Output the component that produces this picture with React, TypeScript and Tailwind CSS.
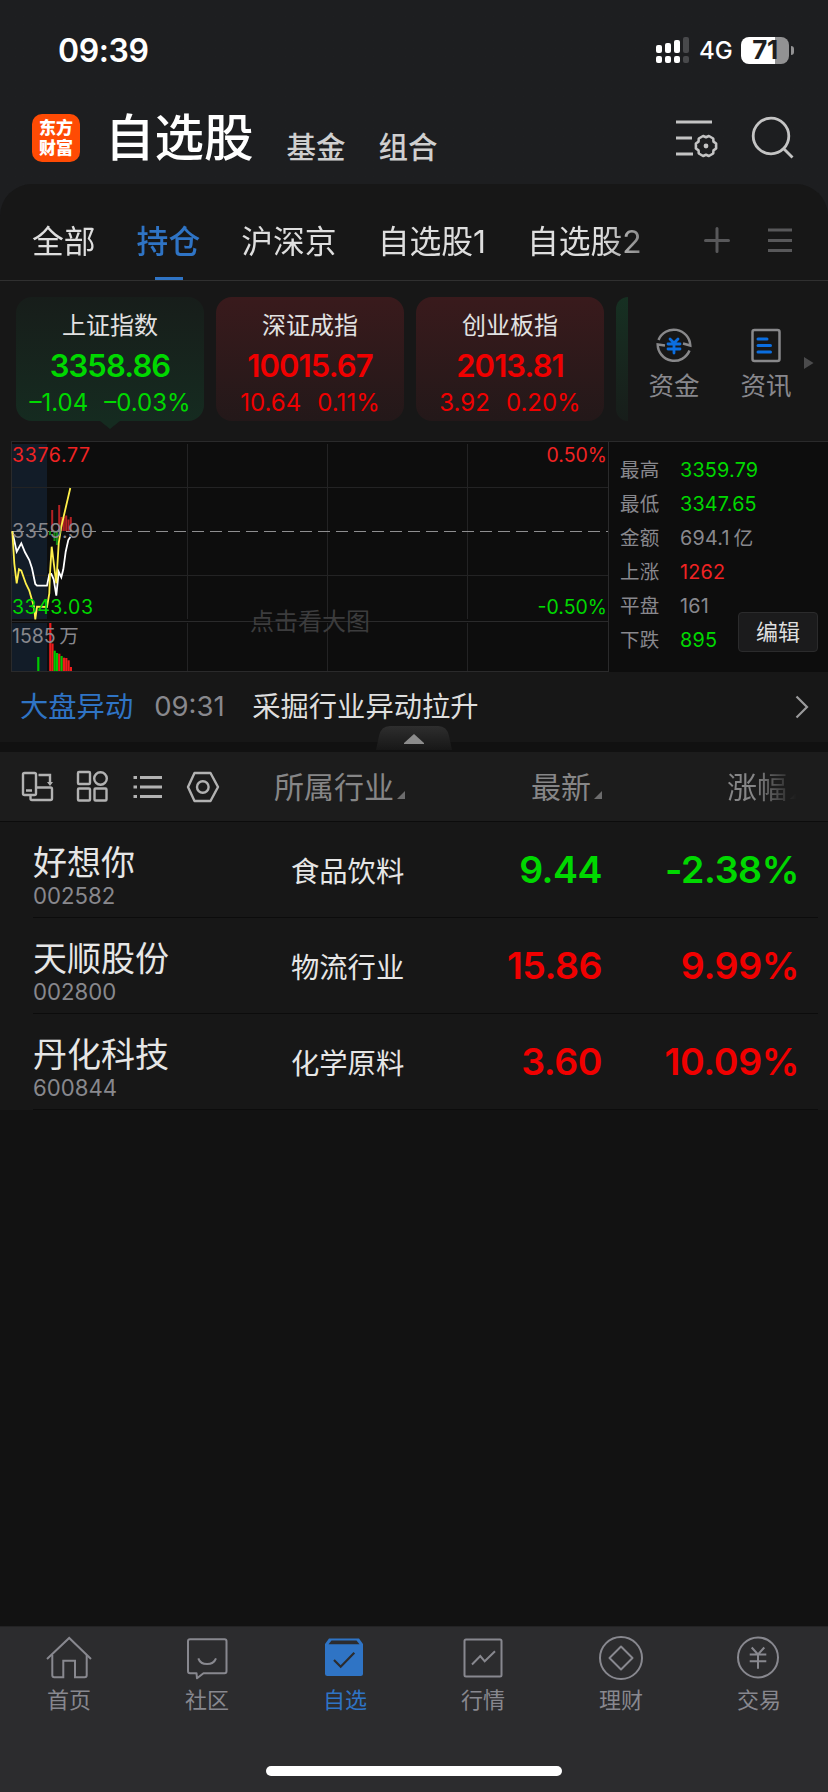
import React from 'react';
import clsx from 'clsx';

interface Quote {
  name: string;
  code: string;
  industry: string;
  price: string;
  change: string;
  up: boolean;
}

interface IndexItem {
  name: string;
  value: string;
  diff: string;
  percent: string;
  up: boolean;
  active?: boolean;
}

const indexes: IndexItem[] = [
  { name: '上证指数', value: '3358.86', diff: '–1.04', percent: '–0.03%', up: false, active: true },
  { name: '深证成指', value: '10015.67', diff: '10.64', percent: '0.11%', up: true },
  { name: '创业板指', value: '2013.81', diff: '3.92', percent: '0.20%', up: true },
];

const stats = [
  { label: '最高', value: '3359.79', color: 'text-[#00d800]' },
  { label: '最低', value: '3347.65', color: 'text-[#00d800]' },
  { label: '金额', value: '694.1\u2009亿', color: 'text-[#88888d]' },
  { label: '上涨', value: '1262', color: 'text-[#f02323]' },
  { label: '平盘', value: '161', color: 'text-[#88888d]' },
  { label: '下跌', value: '895', color: 'text-[#00d800]' },
];

const quotes: Quote[] = [
  { name: '好想你', code: '002582', industry: '食品饮料', price: '9.44', change: '-2.38%', up: false },
  { name: '天顺股份', code: '002800', industry: '物流行业', price: '15.86', change: '9.99%', up: true },
  { name: '丹化科技', code: '600844', industry: '化学原料', price: '3.60', change: '10.09%', up: true },
];

// [x, top, height, up]
const strengthBars: [number, number, number, boolean][] = [
  [38, 90, 4, false],
  [40.2, 69, 21, true],
  [42.5, 90, 10, false],
  [44.9, 90, 14, false],
  [47.2, 64, 26, true],
  [49.5, 76, 14, true],
  [51.8, 76, 14, true],
  [54.2, 74.5, 15.5, true],
  [56.5, 78.5, 11.5, true],
  [58.8, 76, 14, true],
];

// [x, top, up]
const volumeBars: [number, number, boolean][] = [
  [26.2, 216, false],
  [38.2, 182, true],
  [40.4, 202.5, true],
  [42.6, 209.7, false],
  [44.9, 212, false],
  [47.2, 212.7, true],
  [49.5, 215, false],
  [51.8, 216.7, true],
  [54.2, 217, true],
  [56.5, 219.3, true],
  [58.8, 226, true],
];

function StatusBar() {
  return (
    <div className="flex h-[98px] items-center pl-[58px] pr-[34px] pt-[2px]">
      <span className="mt-[1px] text-[32px] font-semibold leading-none tracking-[-0.4px] text-white">09:39</span>
      <svg className="ml-auto" width="33" height="26" viewBox="0 0 33 26">
        <g fill="#fff">
          <rect x="0" y="8" width="6" height="8" rx="2" />
          <rect x="9" y="6" width="6" height="10" rx="2" />
          <rect x="18" y="3" width="6" height="13" rx="2" />
          <rect x="0" y="19" width="6" height="7" rx="2" />
          <rect x="9" y="19" width="6" height="7" rx="2" />
          <rect x="18" y="19" width="6" height="7" rx="2" />
        </g>
        <rect x="27" y="0" width="6" height="16" rx="2" fill="#48494b" />
        <rect x="27" y="19" width="6" height="7" rx="2" fill="#48494b" />
      </svg>
      <span className="ml-[10px] mt-[2px] w-8 text-[24px] font-medium leading-none text-white">4G</span>
      <div className="ml-[10px] flex h-[27px] w-12 items-center justify-center rounded-[8px] bg-[linear-gradient(90deg,#fff_34px,#929293_34px)]">
        <span className="text-[26px] font-bold leading-none tracking-[-0.5px] text-[#1d1e20]">71</span>
      </div>
      <div className="ml-[2px] h-[9px] w-[3px] rounded-r-full bg-[#929293]" />
    </div>
  );
}

function Header() {
  return (
    <div className="flex h-[86px] items-start pl-8">
      <div className="mt-4 flex h-12 w-12 flex-col items-center justify-center rounded-[10px] bg-[#ff4b04] text-[17px] font-black leading-[20px] text-white">
        <span>东方</span>
        <span>财富</span>
      </div>
      <span className="ml-[25px] mt-[15px] text-[49.5px] font-medium leading-[50px] text-white">自选股</span>
      <span className="ml-[33px] mt-[34px] text-[29.5px] font-medium leading-[30px] text-[#cfcfcf]">基金</span>
      <span className="ml-[33px] mt-[34px] text-[29.5px] font-medium leading-[30px] text-[#cfcfcf]">组合</span>
      <svg className="ml-auto mt-[18px]" width="46" height="44" viewBox="0 0 46 44" fill="none" stroke="#c4c4c4" strokeWidth="3">
        <path d="M2 6H38M2 22H18M2 38H19" />
        <path
          d="M42.1 27.5V32.5L39.5 34.350L39.2 37.5L34.9 40L32 38.7L29.1 40L24.8 37.5L24.5 34.350L21.9 32.5V27.5L24.5 25.650L24.8 22.5L29.1 20L32 21.3L34.9 20L39.2 22.5L39.5 25.650Z"
          strokeWidth="2.600"
          strokeLinejoin="round"
        />
        <circle cx="32" cy="30" r="2.400" fill="#c4c4c4" stroke="none" />
      </svg>
      <svg className="ml-[30px] mr-[32px] mt-[18px]" width="46" height="46" viewBox="0 0 46 46" fill="none" stroke="#c4c4c4" strokeWidth="2.800">
        <circle cx="21" cy="20" r="17.800" />
        <path d="M33 32L42.500 41.500" />
      </svg>
    </div>
  );
}

function GroupTabs() {
  return (
    <div className="flex h-[97px] items-stretch border-b border-[#303030] pl-8 text-[31.8px] leading-none text-[#dedede]">
      <div className="flex w-[630px] items-stretch gap-[41px] [mask-image:linear-gradient(90deg,#000_570px,transparent_660px)]">
        <span className="flex items-center pt-[20px]">全部</span>
        <span className="relative flex items-center pt-[20px] font-medium text-[#2f74c5]">
          持仓
          <i className="absolute bottom-[-1px] left-[18px] h-1 w-7 bg-[#2f74c5]" />
        </span>
        <span className="flex items-center pt-[20px]">沪深京</span>
        <span className="flex items-center whitespace-nowrap pt-[20px]">自选股1</span>
        <span className="flex items-center whitespace-nowrap pt-[20px]">自选股2</span>
      </div>
      <svg className="ml-auto mr-[34px] mt-[41px] shrink-0" width="30" height="30" viewBox="0 0 30 30" stroke="#58585a" strokeWidth="3" strokeLinecap="round">
        <path d="M15 3.500V26.500M3.500 15.500H26.500" />
      </svg>
      <svg className="mr-[34px] mt-[41px] shrink-0" width="28" height="30" viewBox="0 0 28 30" stroke="#58585a" strokeWidth="3.200">
        <path d="M2 5H26M2 15.500H26M2 25.500H26" />
      </svg>
    </div>
  );
}

function IndexCard({ item }: { item: IndexItem }) {
  return (
    <div
      className={clsx(
        'relative flex h-[124px] w-[188px] shrink-0 flex-col items-center rounded-[16px] bg-linear-to-b leading-none',
        item.up ? 'from-[#391a1c] to-[#231819] text-[#f00000]' : 'from-[#171d1a] to-[#152b20] text-[#00d800]',
      )}
    >
      <span className="mt-[17px] text-[24px] leading-[24px] text-[#e2e2e2]">{item.name}</span>
      <span className="mt-[12px] text-[31px] font-semibold leading-[32px] tracking-[-0.9px]">{item.value}</span>
      <span className="mt-[9px] flex gap-[16px] text-[24px] leading-[24px]">
        <span>{item.diff}</span>
        <span>{item.percent}</span>
      </span>
      {item.active && (
        <svg className="absolute left-[84px] top-[124px]" width="20" height="8" viewBox="0 0 20 8">
          <path d="M0 0H20L10 8Z" fill="#152b20" />
        </svg>
      )}
    </div>
  );
}

function IndexStrip() {
  return (
    <div className="flex h-[160px] items-start pl-4 pt-4">
      <div className="flex w-[612px] gap-3">
        {indexes.map((item) => (
          <IndexCard key={item.name} item={item} />
        ))}
        <div className="h-[124px] w-3 rounded-l-[14px] bg-linear-to-b from-[#163022] to-[#171d1a]" />
      </div>
      <div className="ml-[18px] mt-[28px] flex w-14 flex-col items-center text-[25.500px] leading-[26px] text-[#88888d]">
        <svg width="40" height="40" viewBox="0 0 40 40" fill="none" stroke="#88888a" strokeWidth="2.500">
          <path d="M4.500 15A16.500 16.500 0 0 1 36.300 20.500L29 18.500M35.500 25.500A16.500 16.500 0 0 1 3.700 19.500L11 20.500" />
          <path d="M16 14L20 18L24 14M14 19H26M14 24H26M20 18V28" stroke="#0b6ee0" strokeWidth="2.800" strokeLinecap="round" />
        </svg>
        <span className="mt-[8px]">资金</span>
      </div>
      <div className="ml-[36px] mt-[28px] flex w-14 flex-col items-center text-[25.500px] leading-[26px] text-[#88888d]">
        <svg width="40" height="40" viewBox="0 0 40 40" fill="none">
          <rect x="6.500" y="5" width="27" height="31" rx="2" stroke="#88888a" strokeWidth="2.500" />
          <path d="M12 14H21M12 20.500H24.500M12 27H24.500" stroke="#0b6ee0" strokeWidth="3" strokeLinecap="round" />
        </svg>
        <span className="mt-[8px]">资讯</span>
      </div>
      <svg className="ml-[10px] mt-[60px]" width="10" height="12" viewBox="0 0 10 12">
        <path d="M0 0L9.500 6L0 12Z" fill="#4b4b4c" />
      </svg>
    </div>
  );
}

function MinuteChart() {
  return (
    <svg className="ml-[11px] shrink-0" width="598" height="231" viewBox="0 0 598 231" fontSize="19.500">
      <rect width="598" height="231" fill="#0d0d0d" />
      <path d="M1 3H36V178H1ZM1 182H36V230H1Z" fill="#121c28" />
      <path d="M0 .5H598M.5 0V231M597.500 0V231M0 180.500H598M0 230.500H598" stroke="#2a2a2b" fill="none" />
      <path
        d="M1 46.500H597M1 134.500H597M176.500 3V178M316.500 3V178M456.500 3V178M176.500 182V230M316.500 182V230M456.500 182V230"
        stroke="#232324"
        fill="none"
      />
      <path d="M1 90.500H597" stroke="#8e8e90" strokeDasharray="12 6" />
      {strengthBars.map(([x, y, h, up]) => (
        <rect key={x} x={x} y={y} width="2" height={h} fill={up ? '#b32224' : '#0f8c14'} />
      ))}
      {volumeBars.map(([x, y, up]) => (
        <rect key={x} x={x} y={y} width="2.200" height={230 - y} fill={up ? '#ee1c1c' : '#00c800'} />
      ))}
      <g fill="none" strokeWidth="1.800">
        <polyline
          stroke="#fff"
          points="1.3,90.3 5.7,110.7 10.3,102.3 14,111.3 18.3,119 21,127.3 24.3,143 26,144.7 36,144.7 38.3,133.3 40.3,133 42.7,138.3 45.3,154.7 47.7,130.7 50.3,136.3 52.3,128.3 54.7,110.7 57.3,99 59.3,96"
        />
        <polyline
          stroke="#fff04a"
          points="1.3,90.3 3.3,122.3 5.7,142.3 8,128.3 10.3,129.7 15,143 18.3,149.7 21,159 23,165.7 24.3,178.3 26,165.7 36,166 38.3,152.3 39,132.3 40.7,105.7 45.3,142.3 47.7,102.3 50.3,85.7 59.3,47"
        />
      </g>
      <text x="1" y="21" fill="#f02323" textLength="78">3376.77</text>
      <text x="1" y="97" fill="#88888d" textLength="81">3359.90</text>
      <text x="1" y="173" fill="#00d800" textLength="81">3343.03</text>
      <text x="1" y="202" fill="#88888d">{'1585\u2009万'}</text>
      <text x="596" y="21" fill="#f02323" textAnchor="end">0.50%</text>
      <text x="596" y="173" fill="#00d800" textAnchor="end">-0.50%</text>
      <text x="239" y="189" fill="#3c3c3d" fontSize="24">点击看大图</text>
    </svg>
  );
}

function MarketPanel() {
  return (
    <div className="flex h-[231px]">
      <MinuteChart />
      <div className="relative flex-1 border-t border-[#2a2a2b] bg-[#0d0d0d] pl-[11px] pt-[12px]">
        {stats.map((s) => (
          <div key={s.label} className="flex h-[34px] items-center leading-none tracking-[0.2px]">
            <span className="w-[60px] text-[19.500px] text-[#88888d]">{s.label}</span>
            <span className={clsx('text-[19.800px]', s.color)}>{s.value}</span>
          </div>
        ))}
        <button
          type="button"
          className="absolute right-[10px] top-[170px] flex h-10 w-20 items-center justify-center rounded-[4px] border border-[#2b2b2c] bg-[#1b1b1c] text-[22px] leading-none text-[#dedede]"
        >
          编辑
        </button>
      </div>
    </div>
  );
}

function NewsRow() {
  return (
    <div className="relative h-[80px] bg-[#111111]">
      <div className="flex h-[70px] items-center bg-[#171717] pl-5 text-[28.300px] leading-none">
        <span className="text-[#2f74c5]">大盘异动</span>
        <span className="ml-[21px] w-[78px] text-[27.500px] text-[#88888d]">09:31</span>
        <span className="ml-5 text-[#dedede]">采掘行业异动拉升</span>
        <svg className="ml-auto mr-[19px]" width="14" height="24" viewBox="0 0 14 24" fill="none" stroke="#9a9a9b" strokeWidth="2.200">
          <path d="M1.500 1.500L12 12L1.500 22.500" />
        </svg>
      </div>
      <svg className="absolute left-[376px] top-[54px]" width="76" height="24" viewBox="0 0 76 24">
        <defs>
          <linearGradient id="handle" x1="0" y1="0" x2="0" y2="1">
            <stop offset="0" stopColor="#2e2e2e" />
            <stop offset="1" stopColor="#171717" />
          </linearGradient>
        </defs>
        <path d="M0 24L3 10Q5 0 14 0H62Q71 0 73 10L76 24Z" fill="url(#handle)" />
        <path d="M38 8L48 17V18H28V17Z" fill="#8c8c8c" />
      </svg>
    </div>
  );
}

function SortMark() {
  return (
    <svg className="mb-[3px] ml-[3px]" width="8" height="8" viewBox="0 0 8 8">
      <path d="M8 0V8H0Z" fill="#6c6c6d" />
    </svg>
  );
}

function TableHeader() {
  return (
    <div className="flex h-[70px] items-center border-b border-[#0c0c0c] bg-[#1c1c1c] pl-5 text-[30px] leading-none text-[#868687]">
      <svg width="201" height="36" viewBox="0 0 201 36" fill="none" stroke="#b2b2b2" strokeWidth="2.400">
        <rect x="3" y="4" width="13" height="22" rx="1.500" />
        <path d="M6 21.500H12M18.500 6H30V15M10.500 27V29.500Q10.500 31 12 31H30.500Q32 31 32 29.500V20Q32 18.500 30.500 18.500H17" />
        <path d="M27 13H33L30 17Z" fill="#b2b2b2" stroke="none" />
        <rect x="58" y="3" width="12" height="12" rx="1" />
        <circle cx="80.500" cy="9.500" r="6.300" />
        <rect x="58" y="19.500" width="12" height="12" rx="1" />
        <rect x="74.500" y="19.500" width="12" height="12" rx="1" />
        <path d="M113.500 8.500H117M113.500 18H117M113.500 27.500H117M120 8.500H142M120 18H142M120 27.500H142" strokeWidth="3" />
        <path d="M174.500 4H190.500L198 18L190.500 32H174.500L168 18Z" strokeLinejoin="round" />
        <circle cx="182.800" cy="18" r="5.800" />
      </svg>
      <div className="flex w-[381px] items-end pl-[53px]">
        <span>所属行业</span>
        <SortMark />
        <span className="ml-auto">最新</span>
        <SortMark />
      </div>
      <div className="ml-auto mr-[30px] flex items-end [mask-image:linear-gradient(90deg,#000_38%,transparent_98%)]">
        <span>涨幅</span>
        <SortMark />
      </div>
    </div>
  );
}

function QuoteRow({ quote }: { quote: Quote }) {
  const color = quote.up ? 'text-[#f00000]' : 'text-[#00d800]';
  return (
    <div className="h-24 bg-[#171717] pl-[33px] pr-[10px]">
      <div className="flex h-full items-center border-b border-[#0c0c0c]">
        <div className="w-[258px] pt-[12px]">
          <p className="text-[34px] leading-[36px] text-[#e6e6e6]">{quote.name}</p>
          <p className="mt-[4px] text-[22.200px] leading-[22px] text-[#88888d]">{quote.code}</p>
        </div>
        <span className="w-[130px] pt-[5px] text-[28.300px] leading-none text-[#e6e6e6]">{quote.industry}</span>
        <span className={clsx('flex-1 text-right text-[37.500px] font-semibold leading-none tracking-[-0.5px]', color)}>
          {quote.price}
        </span>
        <span className={clsx('w-[197px] text-right text-[37.500px] font-semibold leading-none tracking-[-0.4px]', color)}>
          {quote.change}
        </span>
        <span className="w-[19px]" />
      </div>
    </div>
  );
}

const navItems = [
  {
    label: '首页',
    icon: (
      <>
        <path d="M2 25L24.200 4L46 25" />
        <path d="M7.300 21V41.300Q7.300 43.300 9.300 43.300H18.300V26.700H30V43.300H39.700Q41.700 43.300 41.700 41.300V21" />
      </>
    ),
  },
  {
    label: '社区',
    icon: (
      <>
        <path d="M7 5.300H41.500Q43.500 5.300 43.500 7.300V37Q43.500 39.200 41.500 39.200H20.500L14 44.300L13.500 39.200H7Q5 39.200 5 37V7.300Q5 5.300 7 5.300Z" strokeLinejoin="round" />
        <path d="M15.300 24.300C18 32 30 32 33 24.300" />
      </>
    ),
  },
  {
    label: '自选',
    active: true,
    icon: (
      <>
        <path d="M8 4.500H38L42 10V39.500Q42 42 39.500 42H6.500Q4 42 4 39.500V10Z" fill="#2f74c5" stroke="none" />
        <path d="M10.500 6.500H35.500L38.500 10.300H7.500Z" fill="#2c2c2e" stroke="none" />
        <path d="M13 26L19.700 32.700L33.300 18.700" stroke="#2c2c2e" strokeWidth="2.200" />
      </>
    ),
  },
  {
    label: '行情',
    icon: (
      <>
        <rect x="5.500" y="5.500" width="37" height="37" rx="1.500" />
        <path d="M13 30.500L21.300 22L25.700 27.300L36 17.200" />
      </>
    ),
  },
  {
    label: '理财',
    icon: (
      <>
        <circle cx="24" cy="24" r="21" />
        <path d="M24 12.500L35.500 24L24 35.500L12.500 24Z" strokeLinejoin="round" />
      </>
    ),
  },
  {
    label: '交易',
    icon: (
      <>
        <circle cx="23" cy="23.500" r="20" />
        <path d="M16.700 13.500L23 20.500L29.300 13.500M23 20.500V34.700M14.700 20.500H31.300M14.700 27.300H31.300" />
      </>
    ),
  },
];

function NavBar() {
  return (
    <div className="flex h-[166px] flex-col items-center border-t border-[#232324] bg-[#2c2c2e]">
      <div className="flex w-full">
        {navItems.map((item) => (
          <div
            key={item.label}
            className={clsx('flex flex-1 flex-col items-center pt-[7px]', item.active ? 'text-[#2f74c5]' : 'text-[#88888f]')}
          >
            <svg width="48" height="48" viewBox="0 0 48 48" fill="none" stroke="currentColor" strokeWidth="2">
              {item.icon}
            </svg>
            <span className="mt-[7px] text-[22px] leading-[22px]">{item.label}</span>
          </div>
        ))}
      </div>
      <div className="mt-[55px] h-[10px] w-[296px] rounded-full bg-white" />
    </div>
  );
}

export default function App() {
  return (
    <div className="flex h-[1792px] w-[828px] flex-col overflow-hidden bg-[#121212] font-['Inter','Noto_Sans_CJK_SC',sans-serif]">
      <div className="bg-linear-to-b from-[#1d1e20] from-50% to-[#212121]">
        <StatusBar />
        <Header />
        <div className="rounded-t-[32px] bg-[#171717]">
          <GroupTabs />
          <IndexStrip />
        </div>
      </div>
      <div className="bg-[#171717]">
        <MarketPanel />
      </div>
      <NewsRow />
      <TableHeader />
      {quotes.map((quote) => (
        <QuoteRow key={quote.code} quote={quote} />
      ))}
      <div className="flex-1" />
      <NavBar />
    </div>
  );
}
